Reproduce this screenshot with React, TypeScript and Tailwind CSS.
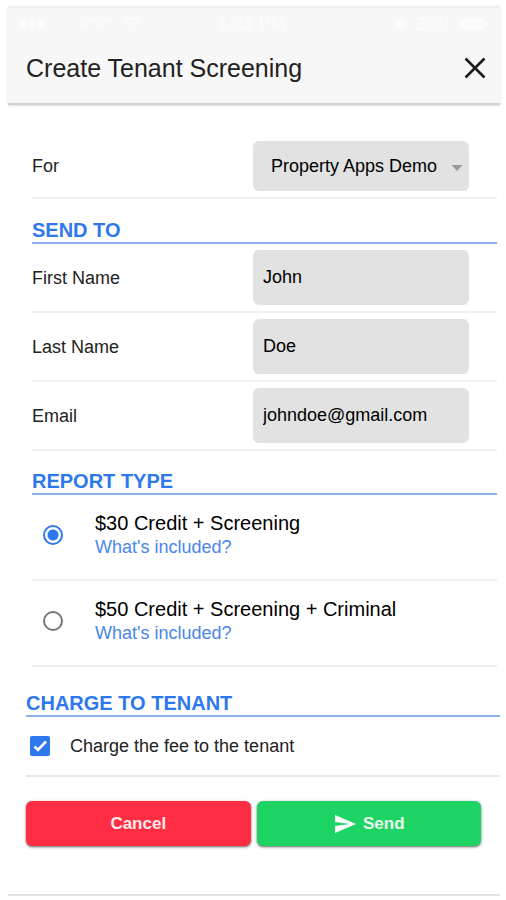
import { useState } from "react";
import { MdSend } from "react-icons/md";

const contactFields = [
  { id: "firstName", label: "First Name", type: "text", value: "John" },
  { id: "lastName", label: "Last Name", type: "text", value: "Doe" },
  { id: "email", label: "Email", type: "email", value: "johndoe@gmail.com" },
];

const reports = [
  { id: "credit", title: "$30 Credit + Screening" },
  { id: "criminal", title: "$50 Credit + Screening + Criminal" },
];

const StatusBar = () => (
  <div className="flex h-8 items-center justify-between px-2 text-[18px] text-white opacity-70">
    <div className="flex flex-1 items-center gap-2">
      <svg width="54" height="8" viewBox="0 0 54 8" fill="white">
        <circle cx="6" cy="4" r="3.5" />
        <circle cx="16" cy="4" r="3.5" />
        <circle cx="26" cy="4" r="3.5" />
        <circle cx="36" cy="4" r="3" fill="none" stroke="white" strokeOpacity="0.4" />
        <circle cx="46" cy="4" r="3" fill="none" stroke="white" strokeOpacity="0.4" />
      </svg>
      <span className="text-[14px]">AT&T</span>
      <svg width="20" height="14" viewBox="0 0 20 14" fill="none" stroke="white" strokeWidth="2">
        <path d="M1 5a13 13 0 0 1 18 0M4 8a9 9 0 0 1 12 0M7 11a4 4 0 0 1 6 0" />
      </svg>
    </div>
    <span>1:33 PM</span>
    <div className="flex flex-1 items-center justify-end gap-2 pr-1">
      <svg width="12" height="12" viewBox="0 0 12 12" fill="white">
        <circle cx="6" cy="6" r="5" />
      </svg>
      <span>35%</span>
      <svg width="28" height="12" viewBox="0 0 28 12" fill="white">
        <rect width="24" height="12" rx="2" />
        <rect x="25" y="4" width="2" height="4" />
      </svg>
    </div>
  </div>
);

const SectionTitle = ({ children }: { children: string }) => (
  <h2 className="border-b-2 border-[#8fb0e8] text-[20px] leading-6 font-bold text-[#2e78ee]">
    {children}
  </h2>
);

const App = () => {
  const [fields, setFields] = useState(contactFields);
  const [report, setReport] = useState("credit");
  const [charge, setCharge] = useState(true);

  const updateField = (id: string, value: string) =>
    setFields(fields.map((f) => (f.id === id ? { ...f, value } : f)));

  return (
    <div className="bg-white pt-1.5 pr-1.5 pl-2 font-['Liberation_Sans',Arial,sans-serif] text-[18px] leading-6 text-[#222]">
      <div className="border-b-2 border-[#e2e2e2]">
        <header className="border-t-2 border-b-2 border-t-[#efefef] border-b-[#d2d2d2] bg-[#f7f7f7] shadow-sm">
          <StatusBar />
          <div className="flex h-[63px] items-center justify-between pr-3 pb-2 pl-[18px]">
            <h1 className="text-[25px] leading-8">Create Tenant Screening</h1>
            <button type="button" aria-label="Close">
              <svg width="26" height="26" viewBox="0 0 26 26" fill="none" stroke="#1c1c1c" strokeWidth="2.6">
                <path d="M3.5 3.5 22.5 22.5M22.5 3.5 3.5 22.5" />
              </svg>
            </button>
          </div>
        </header>

        <form onSubmit={(e) => e.preventDefault()}>
          <div className="pt-9 pr-[3px] pl-6">
            <div className="flex items-center justify-between border-b-2 border-[#f1f1f1] pr-7 pb-1.5">
              <label htmlFor="for">For</label>
              <div className="relative w-[216px]">
                <select
                  id="for"
                  className="h-[50px] w-full appearance-none rounded-md bg-[#e2e2e2] pr-6 pl-[18px] text-black"
                >
                  <option>Property Apps Demo</option>
                </select>
                <svg
                  className="pointer-events-none absolute top-6 right-1.5"
                  width="12"
                  height="6"
                  viewBox="0 0 12 6"
                  fill="#999"
                >
                  <path d="M0.5 0h11L6 6z" />
                </svg>
              </div>
            </div>

            <div className="pt-[19px]">
              <SectionTitle>SEND TO</SectionTitle>
            </div>
            {fields.map((field) => (
              <div
                key={field.id}
                className="flex items-center justify-between border-b-2 border-[#f1f1f1] py-1.5 pr-7"
              >
                <label htmlFor={field.id}>{field.label}</label>
                <input
                  id={field.id}
                  type={field.type}
                  value={field.value}
                  onChange={(e) => updateField(field.id, e.target.value)}
                  className="h-[55px] w-[216px] rounded-md bg-[#e2e2e2] px-2.5 text-black"
                />
              </div>
            ))}

            <div className="pt-[18px]">
              <SectionTitle>REPORT TYPE</SectionTitle>
            </div>
            {reports.map(({ id, title }) => (
              <div key={id} className="flex items-center border-b-2 border-[#efefef] pt-4 pb-5">
                <input
                  id={id}
                  type="radio"
                  name="report"
                  checked={report === id}
                  onChange={() => setReport(id)}
                  className="ml-[11px] size-5 appearance-none rounded-full border-2 border-[#777] checked:border-[#2e78ee] checked:bg-[radial-gradient(circle,#2e78ee_5px,white_6px)]"
                />
                <div className="ml-8 flex flex-col items-start">
                  <label htmlFor={id} className="text-[20px] text-black">
                    {title}
                  </label>
                  <a href="#included" className="text-[#4a86ea]">
                    What's included?
                  </a>
                </div>
              </div>
            ))}
          </div>

          <div className="pt-6 pl-[18px]">
            <SectionTitle>CHARGE TO TENANT</SectionTitle>
            <div className="flex h-[60px] items-center border-b-2 border-[#e8e8e8] pl-1">
              <div className="relative size-5">
                <input
                  id="charge"
                  type="checkbox"
                  checked={charge}
                  onChange={(e) => setCharge(e.target.checked)}
                  className="block size-5 appearance-none rounded-xs border-2 border-[#777] checked:border-[#2e78ee] checked:bg-[#2e78ee]"
                />
                {charge && (
                  <svg
                    className="pointer-events-none absolute inset-0"
                    width="20"
                    height="20"
                    viewBox="0 0 20 20"
                    fill="none"
                    stroke="white"
                    strokeWidth="2.6"
                  >
                    <path d="M4.5 10.5 8 14 16 5.5" />
                  </svg>
                )}
              </div>
              <label htmlFor="charge" className="pl-5">
                Charge the fee to the tenant
              </label>
            </div>
          </div>

          <div className="grid grid-cols-2 gap-1.5 pt-6 pr-[19px] pb-12 pl-[18px] text-[17px] font-bold text-white/90">
            <button type="button" className="h-[45px] rounded-md bg-[#ff2d44] shadow-sm shadow-black/50">
              Cancel
            </button>
            <button
              type="submit"
              className="flex h-[45px] items-center justify-center gap-1.5 rounded-md bg-[#1dd363] shadow-sm shadow-black/50"
            >
              <MdSend className="size-6 text-white" />
              Send
            </button>
          </div>
        </form>
      </div>
    </div>
  );
};

export default App;
